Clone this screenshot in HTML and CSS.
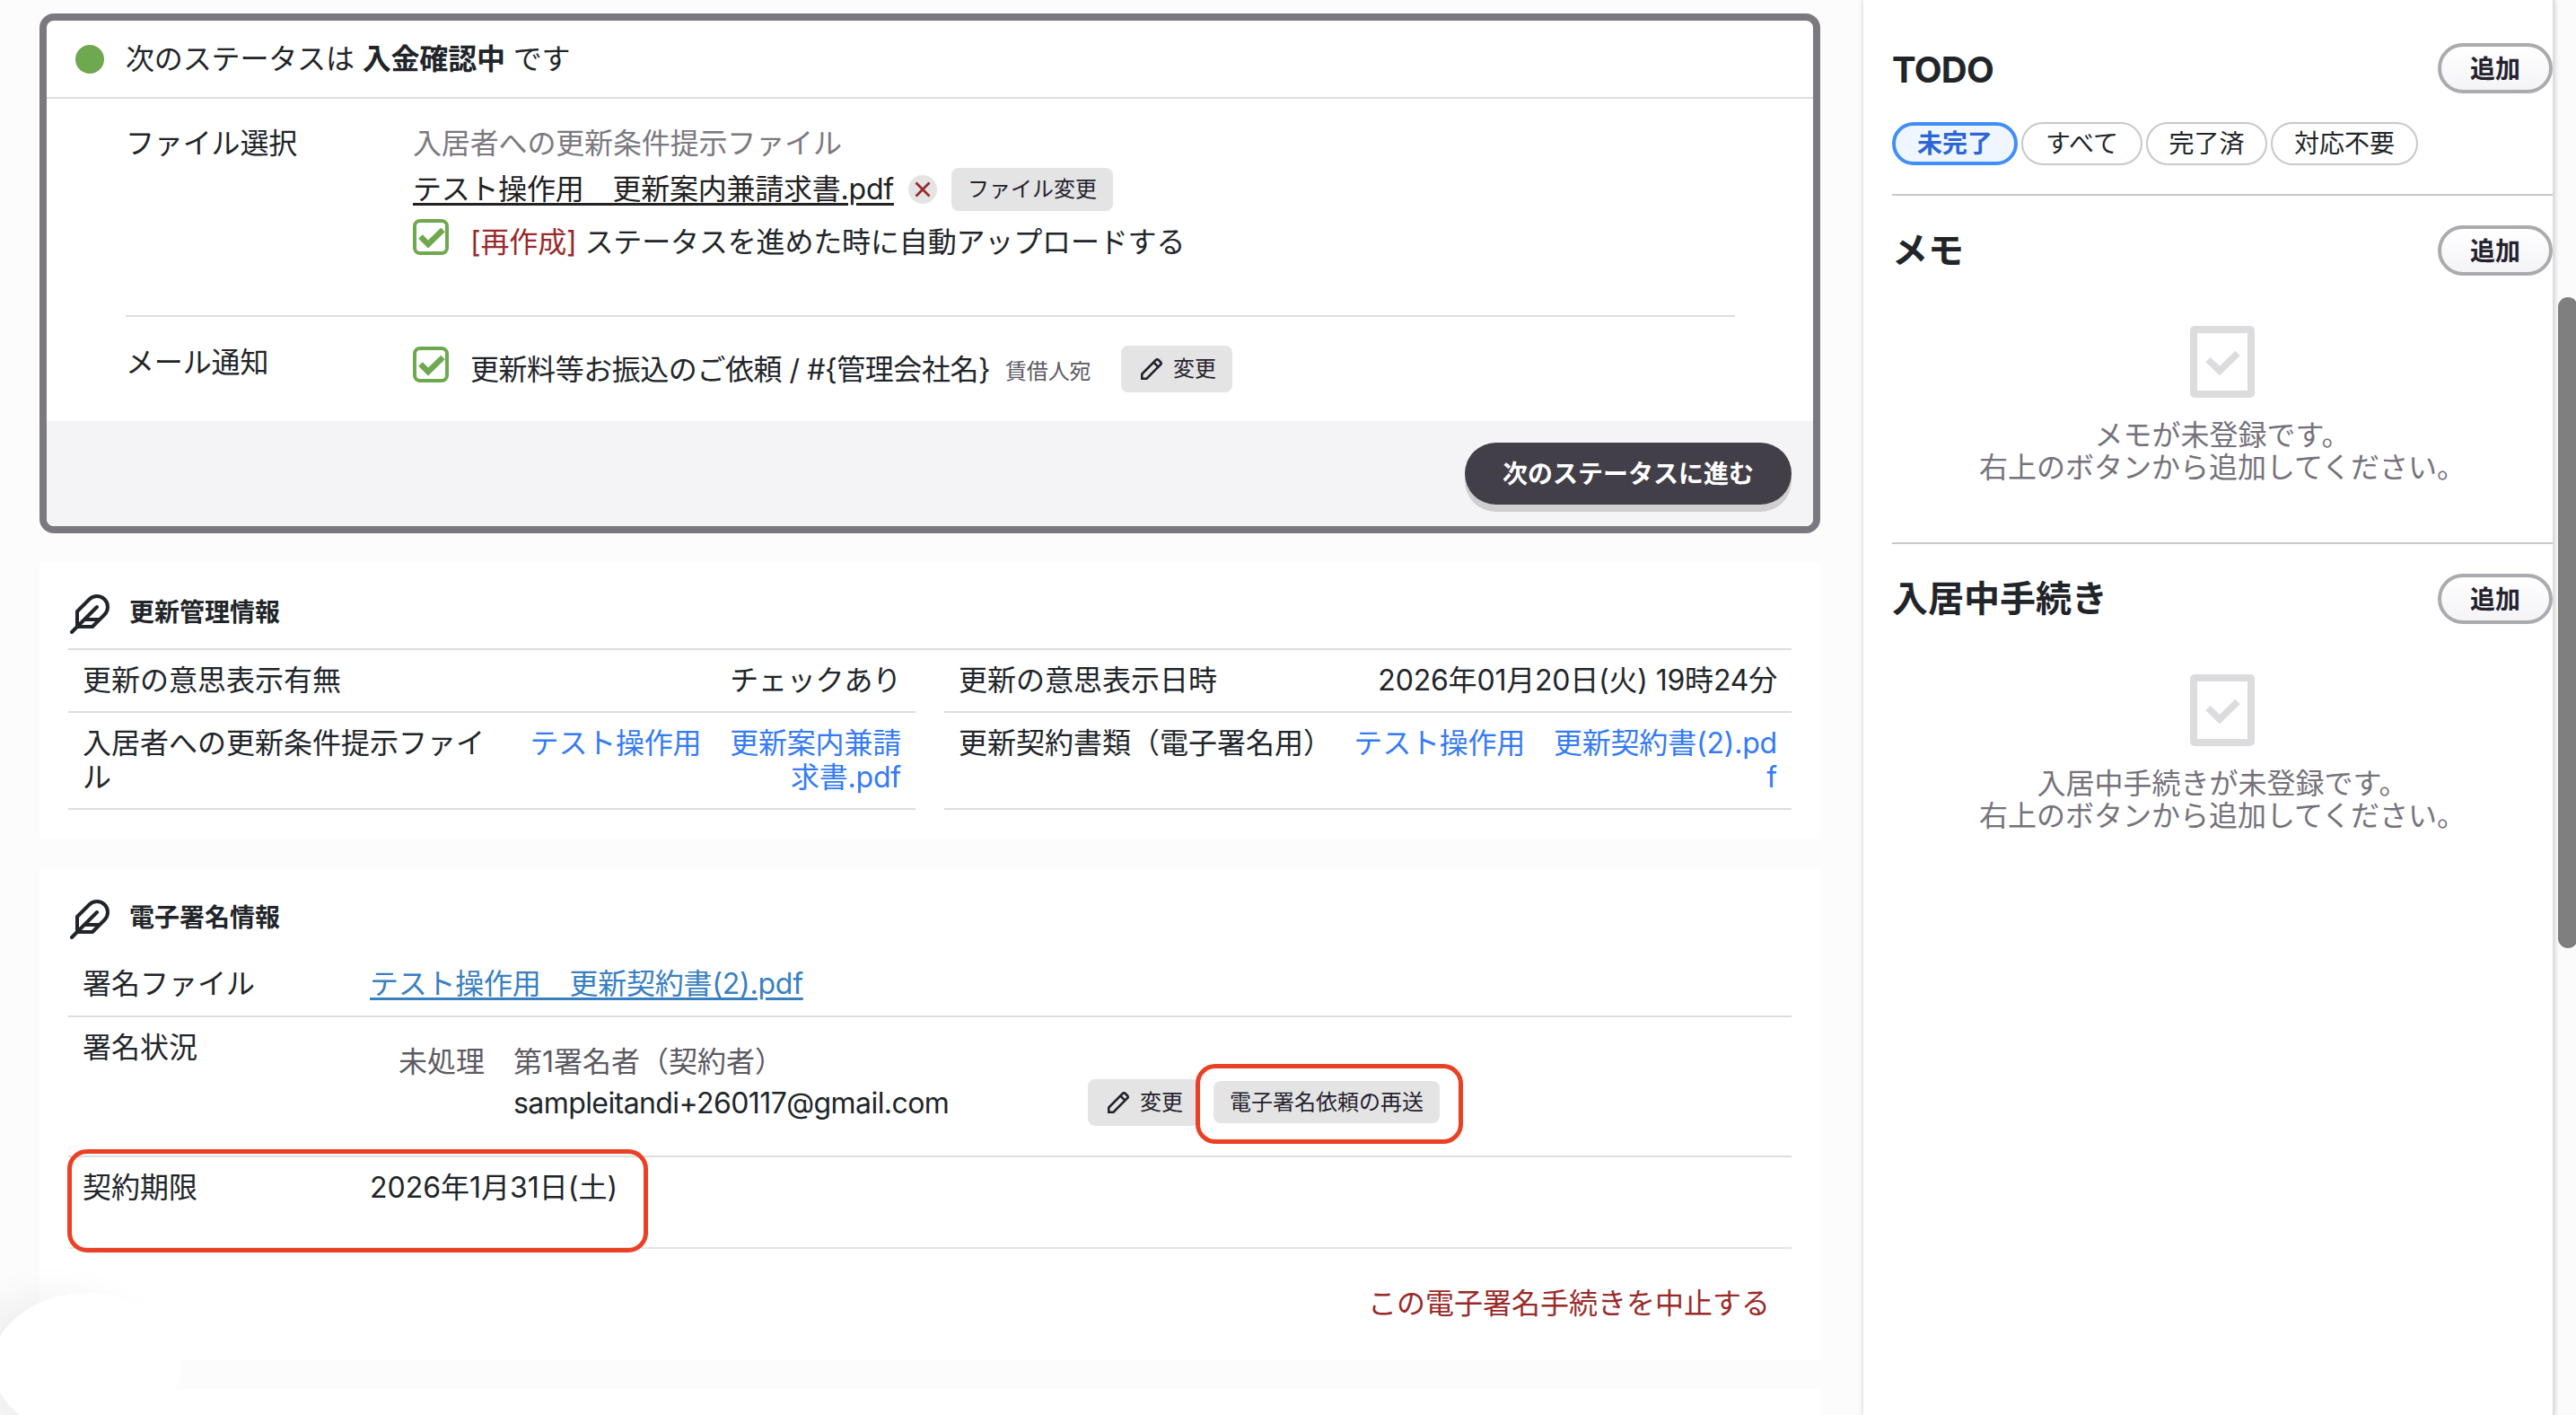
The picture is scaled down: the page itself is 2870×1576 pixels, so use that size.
FILE: index.html
```
<!DOCTYPE html>
<html lang="ja">
<head>
<meta charset="UTF-8">
<meta name="viewport" content="width=device-width, initial-scale=1.0">
<title>更新管理</title>
<link rel="stylesheet" href="styles.css">
</head>
<body>
<svg class="defs" width="0" height="0">
    <symbol id="icon-check" viewBox="0 0 40 40">
        <rect x="2" y="2" width="36" height="36" rx="6" fill="#fff" stroke="currentColor" stroke-width="4"/>
        <path d="M8.5 19.5 17 28 33.5 12" fill="none" stroke="currentColor" stroke-width="6.5"/>
    </symbol>
    <symbol id="icon-pencil" viewBox="0 0 24 24">
        <path d="M1.3 22.7V17.5L17 1.8Q18.3 .8 19.5 1.8L22.2 4.5Q23.2 5.7 22.2 7L6.5 22.7Z M14.6 4.8 19.2 9.4" fill="none" stroke="currentColor" stroke-width="2.6"/>
    </symbol>
    <symbol id="icon-feather" viewBox="0 0 24 24">
        <path d="M20.24 12.24a6 6 0 0 0-8.49-8.49L5 10.5V19h8.5z M16 8 2 22 M17.5 15H9" fill="none" stroke="currentColor" stroke-width="2" stroke-linecap="round" stroke-linejoin="round"/>
    </symbol>
    <symbol id="icon-empty" viewBox="0 0 72 80">
        <rect x="4" y="4" width="64" height="72" rx="1" fill="none" stroke="currentColor" stroke-width="8"/>
        <path d="M20 37.5 33 50 53 30.5" fill="none" stroke="currentColor" stroke-width="7.5"/>
    </symbol>
</svg>

<div class="page">
<main class="main">
    <!-- 次のステータス -->
    <section class="status-card">
        <div class="status-head">
            <span class="dot"></span>
            <p>次のステータスは <b>入金確認中</b> です</p>
        </div>
        <div class="status-row file-row">
            <div class="label">ファイル選択</div>
            <div>
                <div class="muted">入居者への更新条件提示ファイル</div>
                <div class="file-line">
                    <a href="#" class="file-link">テスト操作用　更新案内兼請求書.pdf</a>
                    <button class="remove-btn"><svg viewBox="0 0 32 32"><path d="M8.5 8.5 23.5 23.5M23.5 8.5 8.5 23.5"/></svg></button>
                    <button class="gray-btn">ファイル変更</button>
                </div>
                <div class="check-line">
                    <svg class="checkbox"><use href="#icon-check"/></svg>
                    <span><span class="danger">[再作成]</span> ステータスを進めた時に自動アップロードする</span>
                </div>
            </div>
        </div>
        <div class="status-row mail-row">
            <div class="label">メール通知</div>
            <div class="check-line">
                <svg class="checkbox"><use href="#icon-check"/></svg>
                <span class="mail-title">更新料等お振込のご依頼 / #{管理会社名}</span>
                <span class="mail-to">賃借人宛</span>
                <button class="gray-btn edit-btn"><svg><use href="#icon-pencil"/></svg>変更</button>
            </div>
        </div>
        <div class="status-foot">
            <button class="next-btn">次のステータスに進む</button>
        </div>
    </section>

    <!-- 更新管理情報 -->
    <section class="card info-card">
        <h3><svg><use href="#icon-feather"/></svg>更新管理情報</h3>
        <div class="info-grid">
            <div class="info-row">
                <span class="name">更新の意思表示有無</span>
                <span class="value">チェックあり</span>
            </div>
            <div class="info-row">
                <span class="name">更新の意思表示日時</span>
                <span class="value">2026年01月20日(火) 19時24分</span>
            </div>
            <div class="info-row tall">
                <span class="name">入居者への更新条件提示ファイル</span>
                <a href="#" class="value">テスト操作用　更新案内兼請求書.pdf</a>
            </div>
            <div class="info-row tall">
                <span class="name">更新契約書類（電子署名用）</span>
                <a href="#" class="value">テスト操作用　更新契約書(2).pdf</a>
            </div>
        </div>
    </section>

    <!-- 電子署名情報 -->
    <section class="card sign-card">
        <h3><svg><use href="#icon-feather"/></svg>電子署名情報</h3>
        <div class="sign-row sign-file">
            <div class="name">署名ファイル</div>
            <a href="#">テスト操作用　更新契約書(2).pdf</a>
        </div>
        <div class="sign-row sign-state">
            <div class="name">署名状況</div>
            <div class="signer">
                <span class="state">未処理</span>
                <div class="signer-info">
                    <div class="role">第1署名者（契約者）</div>
                    <div class="mail">sampleitandi+260117@gmail.com</div>
                </div>
                <button class="gray-btn edit-btn"><svg><use href="#icon-pencil"/></svg>変更</button>
                <div class="resend">
                    <button class="gray-btn">電子署名依頼の再送</button>
                </div>
            </div>
        </div>
        <div class="sign-row sign-limit">
            <div class="name">契約期限</div>
            <div class="date">2026年1月31日(土)</div>
            <div class="limit-mark"></div>
        </div>
        <a href="#" class="cancel-link">この電子署名手続きを中止する</a>
    </section>

    <section class="card next-card"></section>
</main>

<aside class="side">
    <section class="side-block todo">
        <div class="side-head"><h2>TODO</h2><button class="add-btn">追加</button></div>
        <div class="chips">
            <button class="chip active">未完了</button>
            <button class="chip">すべて</button>
            <button class="chip">完了済</button>
            <button class="chip">対応不要</button>
        </div>
    </section>
    <section class="side-block">
        <div class="side-head"><h2>メモ</h2><button class="add-btn">追加</button></div>
        <div class="empty">
            <svg><use href="#icon-empty"/></svg>
            <p>メモが未登録です。<br>右上のボタンから追加してください。</p>
        </div>
    </section>
    <section class="side-block">
        <div class="side-head"><h2>入居中手続き</h2><button class="add-btn">追加</button></div>
        <div class="empty">
            <svg><use href="#icon-empty"/></svg>
            <p>入居中手続きが未登録です。<br>右上のボタンから追加してください。</p>
        </div>
    </section>
</aside>
<div class="scroll-track"><div class="scroll-thumb"></div></div>
</div>
<div class="bubble"></div>
</body>
</html>
```
FILE: styles.css
```
* {
    box-sizing: border-box;
}
body {
    margin: 0;
    font-family: Inter, "Noto Sans CJK JP", sans-serif;
    font-size: 32px;
    line-height: 36px;
    color: #212529;
    background-color: #fcfcfc;
    overflow: hidden;
}
h2, h3, p {
    margin: 0;
}
button {
    font-family: inherit;
    color: #25222e;
    border: none;
    padding: 0;
    white-space: nowrap;
}
.defs {
    position: absolute;
}
.page {
    display: flex;
    height: 1576px;
    overflow: hidden;
}
.main {
    width: 2076px;
    padding: 15px 48px 0 44px;
    flex-shrink: 0;
}

/* status card */
.status-card {
    height: 579px;
    border: 8px solid #7b787f;
    border-radius: 16px;
    background-color: #fff;
    overflow: hidden;
    letter-spacing: -0.15px;
}
.status-head {
    display: flex;
    align-items: center;
    gap: 24px;
    height: 87px;
    padding-left: 32px;
    border-bottom: 2px solid #ddd;
}
.dot {
    width: 32px;
    height: 32px;
    border-radius: 50%;
    background-color: #6ea84f;
}
.status-row {
    display: grid;
    grid-template-columns: 320px 1fr;
    margin: 0 87px 0 88px;
}
.file-row {
    height: 243px;
    padding-top: 32px;
    border-bottom: 2px solid #ddd;
}
.muted {
    color: #7b787f;
}
.file-line {
    display: flex;
    align-items: center;
    height: 48px;
    margin-top: 9px;
}
.file-link {
    width: 536px;
    color: #212121;
    text-decoration-thickness: 3px;
    text-underline-offset: 4px;
    letter-spacing: -0.23px;
    white-space: nowrap;
}
.remove-btn {
    width: 32px;
    height: 32px;
    margin: 0 16px;
    border-radius: 50%;
    background-color: #e4e4e4;
}
.remove-btn svg {
    display: block;
    width: 32px;
    height: 32px;
    fill: none;
    stroke: #992a2a;
    stroke-width: 2.8;
}
.gray-btn {
    height: 48px;
    padding: 0 18px;
    font-size: 24px;
    line-height: 48px;
    border-radius: 8px;
    background-color: #e4e4e4;
}
.check-line {
    display: flex;
    align-items: center;
}
.checkbox {
    width: 40px;
    height: 40px;
    margin-right: 24px;
    color: #6ea84f;
}
.file-row .check-line {
    margin-top: 5px;
}
.file-row .check-line > span {
    margin-top: 12px;
}
.danger {
    color: #992a2a;
}
.mail-row {
    height: 116px;
    padding-top: 32px;
}
.mail-row .check-line {
    height: 52px;
}
.mail-row .label {
    padding-top: 1px;
}
.mail-row .checkbox {
    margin-top: -10px;
}
.mail-title {
    width: 580px;
    margin-top: 2px;
    letter-spacing: -0.45px;
    white-space: nowrap;
}
.mail-to {
    width: 96px;
    margin: 6px 33px 0 16px;
    font-size: 24px;
    color: #5c5a62;
}
.edit-btn {
    display: flex;
    align-items: center;
    width: 124px;
    height: 52px;
    padding: 0 0 0 22px;
}
.edit-btn svg {
    width: 24px;
    height: 24px;
    margin-right: 12px;
}
.status-foot {
    display: flex;
    justify-content: flex-end;
    height: 117px;
    padding: 24px 24px 0;
    background-color: #f4f4f6;
}
.next-btn {
    width: 364px;
    height: 69px;
    padding-bottom: 4px;
    border-radius: 35px;
    background-color: #433f49;
    box-shadow: 0 8px 0 #cfcfd1;
    color: #fff;
    font-size: 28px;
    font-weight: bold;
}

/* cards */
.card {
    margin-top: 32px;
    padding: 36px 32px 0;
    background-color: #fff;
}
.card h3 {
    display: flex;
    align-items: center;
    gap: 20px;
    height: 44px;
    padding-bottom: 4px;
    font-size: 28px;
}
.card h3 svg {
    width: 48px;
    height: 48px;
    margin: 4px 0 0;
}
.info-card {
    height: 308px;
}
.info-grid {
    display: grid;
    grid-template-columns: 944px 944px;
    column-gap: 32px;
    margin-top: 16px;
    border-top: 2px solid #ddd;
}
.info-row {
    display: flex;
    justify-content: space-between;
    height: 70px;
    padding: 16px;
    border-bottom: 2px solid #ddd;
}
.info-row.tall {
    height: 108px;
    padding-top: 15px;
    line-height: 38px;
}
.info-row .name {
    max-width: 480px;
    padding-right: 24px;
    flex-shrink: 0;
    word-break: break-all;
}
.info-row .value {
    max-width: 472px;
    text-align: right;
    letter-spacing: -0.2px;
    word-break: break-all;
}
.info-row a {
    color: #357bf5;
    text-decoration: none;
}
.sign-card {
    height: 549px;
}
.sign-row {
    position: relative;
    display: flex;
    padding: 16px 16px 0;
    border-bottom: 2px solid #ddd;
}
.sign-row .name {
    width: 320px;
    flex-shrink: 0;
}
.sign-file {
    height: 72px;
    margin-top: 15px;
    padding-top: 17px;
}
.sign-file a {
    color: #3880c0;
    text-decoration-thickness: 3px;
    text-underline-offset: 4px;
    letter-spacing: -0.23px;
}
.sign-state {
    height: 156px;
}
.signer {
    display: flex;
    align-items: flex-start;
    padding: 16px 0 0 32px;
}
.state, .role {
    color: #5c5a62;
}
.state {
    width: 128px;
}
.signer-info {
    width: 640px;
}
.mail {
    margin-top: 10px;
    letter-spacing: -0.58px;
}
.signer .edit-btn {
    margin-top: 37px;
}
/* frame drawn over the edge of the edit button */
.resend {
    width: 298px;
    height: 89px;
    margin: 20px 0 0 -4px;
    padding: 14px 15px;
    border: 5px solid #ea4025;
    border-radius: 22px;
    background-color: #fff;
    position: relative;
}
.resend .gray-btn {
    display: block;
    width: 252px;
    height: 47px;
    line-height: 47px;
}
.sign-limit {
    height: 102px;
    border-color: #e4e4e4;
}
.limit-mark {
    position: absolute;
    top: -9px;
    left: -1px;
    width: 647px;
    height: 115px;
    border: 5px solid #ea4025;
    border-radius: 22px;
}
.cancel-link {
    display: block;
    margin-top: 43px;
    padding-right: 24px;
    color: #992a2a;
    text-align: right;
    text-decoration: none;
}
.next-card {
    height: 60px;
}

/* right column */
.side {
    width: 770px;
    flex-shrink: 0;
    padding-left: 32px;
    border-right: 2px solid #ddd;
    background-color: #fff;
    box-shadow: 0 0 6px rgba(0, 0, 0, 0.2);
    z-index: 1;
}
.side-block {
    height: 388px;
    padding-top: 33px;
}
.side-block + .side-block {
    border-top: 2px solid #c8c8cb;
}
.todo {
    height: 216px;
    padding-top: 48px;
}
.side-head {
    display: flex;
    align-items: center;
    justify-content: space-between;
    height: 56px;
}
.side-head h2 {
    font-size: 40px;
    line-height: 48px;
}
.todo h2 {
    padding-top: 3px;
    letter-spacing: -0.7px;
}
.add-btn {
    width: 128px;
    height: 56px;
    padding-bottom: 3px;
    border: 4px solid #ababaf;
    border-radius: 28px;
    background: linear-gradient(#fff, #f4f4f7);
    font-size: 28px;
    font-weight: 600;
}
.chips {
    display: flex;
    gap: 4px;
    margin-top: 32px;
}
.chip {
    height: 48px;
    width: 135px;
    border: 2px solid #c8c8cb;
    border-radius: 24px;
    background-color: #fff;
    color: #212529;
    font-size: 28px;
    line-height: 40px;
}
.chip.active {
    width: 140px;
    border: 4px solid #3f8ff7;
    background-color: #eff6ff;
    color: #2c65d5;
    font-weight: bold;
}
.chip:last-child {
    width: 164px;
}
.empty {
    display: flex;
    flex-direction: column;
    align-items: center;
    padding-top: 56px;
    text-align: center;
    color: #75727b;
}
.empty svg {
    width: 72px;
    height: 80px;
    margin-bottom: 24px;
    color: #dcdcde;
}
.scroll-track {
    width: 24px;
    padding: 331px 0 0 4px;
    background-color: #fbfbfb;
}
.scroll-thumb {
    width: 22px;
    height: 725px;
    border-radius: 11px;
    background-color: #7f7f7f;
}

/* floating chat bubble */
.bubble {
    position: absolute;
    left: -8px;
    top: 1440px;
    width: 210px;
    height: 160px;
    border-radius: 50%;
    background-color: #fff;
    box-shadow: -36px 0 40px rgba(0, 0, 0, 0.05);
}
```
